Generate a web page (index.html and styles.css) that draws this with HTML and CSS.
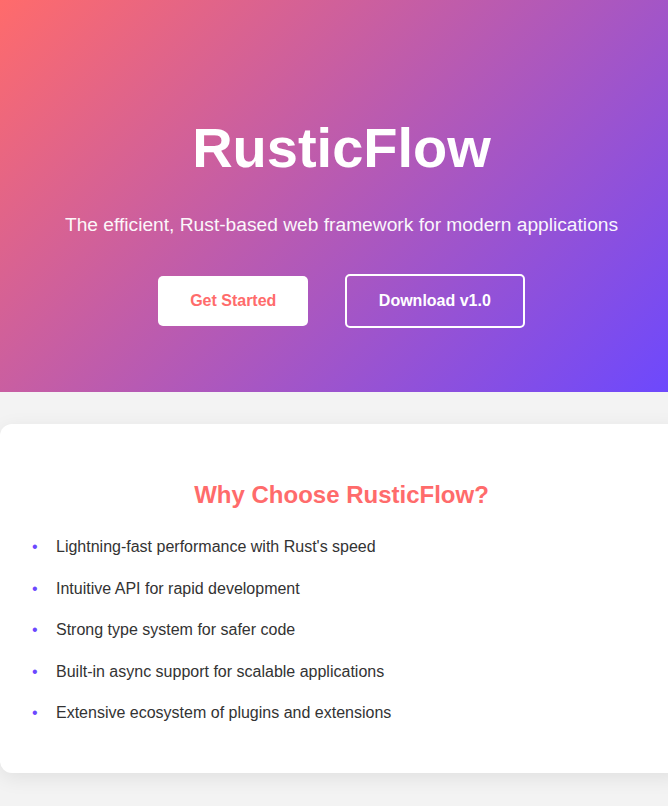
FILE: index.html
```html
<!DOCTYPE html>
<html lang="en">
<head>
<meta charset="utf-8">
<title>RusticFlow</title>
<link rel="stylesheet" href="styles.css">
</head>
<body>
<div class="page">
  <header class="hero">
    <h1 class="hero-title">RusticFlow</h1>
    <p class="hero-subtitle">The efficient, Rust-based web framework for modern applications</p>
    <div class="hero-actions">
      <a class="btn btn-primary" href="#">Get Started</a>
      <a class="btn btn-outline" href="#">Download v1.0</a>
    </div>
  </header>
  <main class="content">
    <section class="card">
      <h2 class="card-title">Why Choose RusticFlow?</h2>
      <ul class="features">
        <li>Lightning-fast performance with Rust's speed</li>
        <li>Intuitive API for rapid development</li>
        <li>Strong type system for safer code</li>
        <li>Built-in async support for scalable applications</li>
        <li>Extensive ecosystem of plugins and extensions</li>
      </ul>
    </section>
  </main>
</div>
</body>
</html>
```
FILE: styles.css
```css
* { box-sizing: border-box; }
html, body { margin: 0; padding: 0; }
body {
  font-family: "Liberation Sans", Arial, sans-serif;
  background: #f3f3f3;
  color: #333;
}
.page { width: 683px; }
.hero {
  background: linear-gradient(135deg, #ff6b6b 0%, #6b48ff 100%);
  color: #fff;
  text-align: center;
  padding: 78px 32px 0;
  height: 392px;
}
.hero-title {
  font-size: 56px;
  font-weight: 700;
  margin: 37px 0 34px;
}
.hero-subtitle {
  font-size: 19.2px;
  margin: 0 0 38px;
  opacity: 0.95;
}
.btn {
  display: inline-block;
  font-size: 16px;
  font-weight: 700;
  text-decoration: none;
  padding: 16px 32px;
  border-radius: 5px;
  margin: 0 16px;
}
.btn-primary {
  background: #fff;
  color: #ff6b6b;
}
.btn-outline {
  color: #fff;
  border: 2px solid #fff;
}
.content {
  padding: 32px 0 33px;
}
.card {
  background: #fff;
  border-radius: 12px;
  box-shadow: 0 5px 20px rgba(0,0,0,0.08);
  padding: 32px 32px 23px;
}
.card-title {
  color: #ff6b6b;
  text-align: center;
  font-size: 24px;
  margin: 25px 0 17px;
}
.features {
  list-style: none;
  padding: 0;
  margin: 0 0 16px;
}
.features li {
  position: relative;
  padding: 8px 0 8px 24px;
  line-height: 1.6;
  font-size: 16px;
}
.features li::before {
  content: "•";
  position: absolute;
  left: 0;
  color: #6b48ff;
}
```
